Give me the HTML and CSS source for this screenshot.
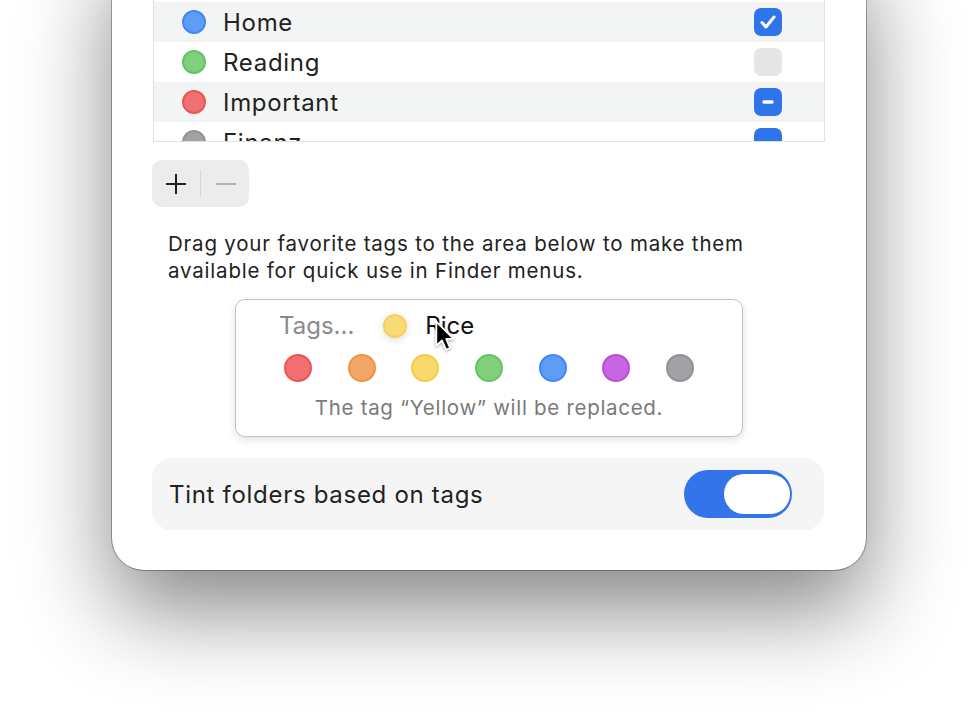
FILE: index.html
```html
<!DOCTYPE html>
<html lang="en">
<head>
  <meta charset="UTF-8">
  <title>Tags</title>
  <link rel="stylesheet" href="styles.css">
</head>
<body>
  <div class="window">
    <div class="tag-list">
      <div class="row">
        <span class="dot purple"></span><span class="name">Work</span>
        <span class="check on"><svg viewBox="0 0 28 28"><path d="M8 14.5l4 4.5 8-10" fill="none" stroke="#fff" stroke-width="3" stroke-linecap="round" stroke-linejoin="round"/></svg></span>
      </div>
      <div class="row">
        <span class="dot blue"></span><span class="name">Home</span>
        <span class="check on"><svg viewBox="0 0 28 28"><path d="M8 14.5l4 4.5 8-10" fill="none" stroke="#fff" stroke-width="3" stroke-linecap="round" stroke-linejoin="round"/></svg></span>
      </div>
      <div class="row">
        <span class="dot green"></span><span class="name">Reading</span>
        <span class="check off"></span>
      </div>
      <div class="row">
        <span class="dot red"></span><span class="name">Important</span>
        <span class="check on"><svg viewBox="0 0 28 28"><path d="M10 14h8" fill="none" stroke="#fff" stroke-width="3.4" stroke-linecap="round"/></svg></span>
      </div>
      <div class="row">
        <span class="dot gray"></span><span class="name">Finanz</span>
        <span class="check on"></span>
      </div>
    </div>

    <div class="buttons">
      <svg class="btn" viewBox="0 0 22 22" width="22" height="22"><path d="M11 1v20M1 11h20" stroke="#222" stroke-width="2"/></svg>
      <span class="sep"></span>
      <svg class="btn" viewBox="0 0 22 22" width="22" height="22"><path d="M1 11h20" stroke="#b3b3b3" stroke-width="2"/></svg>
    </div>

    <p class="hint">Drag your favorite tags to the area below to make them available for quick use in Finder menus.</p>

    <div class="tag-popup">
      <div class="popup-top">
        <span class="placeholder">Tags...</span>
        <span class="dot yellow dragged"></span>
        <span class="drag-name">Rice</span>
        <svg class="cursor" viewBox="0 0 20 30" width="23" height="35">
          <path d="M2 2 L2 23 L7 18.5 L10.5 26.5 L14 25 L10.6 17.2 L17 17 Z" fill="#000" stroke="#fff" stroke-width="1.6" stroke-linejoin="round"/>
        </svg>
      </div>
      <div class="colors">
        <span class="dot big red"></span>
        <span class="dot big orange"></span>
        <span class="dot big yellow"></span>
        <span class="dot big green"></span>
        <span class="dot big blue"></span>
        <span class="dot big purple"></span>
        <span class="dot big gray"></span>
      </div>
      <div class="replace">The tag “Yellow” will be replaced.</div>
    </div>

    <div class="tint-row">
      <span class="tint-label">Tint folders based on tags</span>
      <span class="switch"><span class="knob"></span></span>
    </div>
  </div>
</body>
</html>
```

FILE: styles.css
```css
html {
  height: 100%;
  overflow: hidden;
  background: #fff;
}

body {
  margin: 0;
  padding: 0 0 1px;
  min-height: 718px;
  font-family: Inter, 'Noto Sans', sans-serif;
  color: #222;
}

.window {
  width: 754px;
  box-sizing: border-box;
  margin: -59px auto 0;
  padding: 20px 41px 40px 40px;
  background: #fff;
  border-radius: 0 0 32px 32px;
  box-shadow: 0 0 0 1px rgba(0, 0, 0, 0.3), 0 40px 90px rgba(0, 0, 0, 0.48);
}

.tag-list {
  height: 179px;
  overflow: hidden;
  border: 1px solid #e0e0e0;
  margin-left: 1px;
}

.row {
  display: flex;
  align-items: center;
  height: 40px;
  padding: 0 42px 0 28px;
}

.row:nth-child(even) {
  background: #f3f4f4;
}

.dot {
  width: 20px;
  height: 20px;
  border-radius: 50%;
  border: 2px solid;
  flex: none;
}

.dot.big {
  width: 24px;
  height: 24px;
}

.red { background: #f07070; border-color: #e95656; }
.orange { background: #f3a766; border-color: #ef9344; }
.yellow { background: #f9d86c; border-color: #f6cb4c; }
.green { background: #80cf7e; border-color: #63c462; }
.blue { background: #5f9cf8; border-color: #4187f6; }
.purple { background: #c766e0; border-color: #ba4fd9; }
.gray { background: #a2a2a6; border-color: #929296; }

.name {
  flex: 1;
  margin-left: 17px;
  font-size: 24px;
  letter-spacing: 0.7px;
}

.check {
  width: 28px;
  height: 28px;
  border-radius: 7px;
}

.check svg {
  display: block;
  width: 28px;
  height: 28px;
}

.check.on {
  background: #2f74eb;
}

.check.off {
  background: #e5e5e5;
}

.buttons {
  display: flex;
  align-items: center;
  width: fit-content;
  margin-top: 18px;
  height: 47px;
  padding: 0 12px 0 13px;
  background: #ececec;
  border-radius: 10px;
}

.btn {
  display: block;
}

.sep {
  width: 1px;
  height: 27px;
  background: #d6d6d6;
  margin: 0 14px 0 13px;
}

.hint {
  width: 600px;
  margin: 23px 0 0 16px;
  font-size: 20.5px;
  line-height: 27px;
  letter-spacing: 0.8px;
  color: #222;
}

.tag-popup {
  width: 508px;
  box-sizing: border-box;
  margin: 15px 0 0 83px;
  padding: 8.5px 0 16.5px;
  border: 1.5px solid #c2c2c2;
  border-radius: 10px;
  background: #fff;
  box-shadow: 0 3px 8px rgba(0, 0, 0, 0.12);
}

.popup-top {
  position: relative;
  display: flex;
  align-items: center;
  height: 34px;
  padding-left: 43px;
}

.placeholder {
  font-size: 24px;
  color: #8a8a8a;
}

.dragged {
  margin-left: 29px;
  opacity: 0.9;
  box-shadow: 0 2px 8px rgba(0, 0, 0, 0.15);
}

.drag-name {
  margin-left: 18px;
  font-size: 24px;
  color: #111;
}

.cursor {
  position: absolute;
  left: 198px;
  top: 10px;
  filter: drop-shadow(0 1px 1.5px rgba(0, 0, 0, 0.35));
}

.colors {
  display: flex;
  justify-content: center;
  gap: 35.7px;
  margin-top: 11px;
}

.replace {
  margin-top: 14px;
  text-align: center;
  font-size: 20.5px;
  line-height: 24px;
  letter-spacing: 0.7px;
  color: #7a7a7a;
}

.tint-row {
  display: flex;
  align-items: center;
  justify-content: space-between;
  height: 72px;
  margin: 21px 1px 0 0;
  padding: 0 32px 0 17px;
  background: #f5f5f5;
  border-radius: 20px;
}

.tint-label {
  font-size: 24px;
  letter-spacing: 0.7px;
  color: #222;
}

.switch {
  display: flex;
  justify-content: flex-end;
  align-items: center;
  width: 108px;
  height: 48px;
  box-sizing: border-box;
  padding: 0 2px;
  border-radius: 24px;
  background: #3374ea;
}

.knob {
  width: 66px;
  height: 40px;
  border-radius: 20px;
  background: #fff;
}
```
